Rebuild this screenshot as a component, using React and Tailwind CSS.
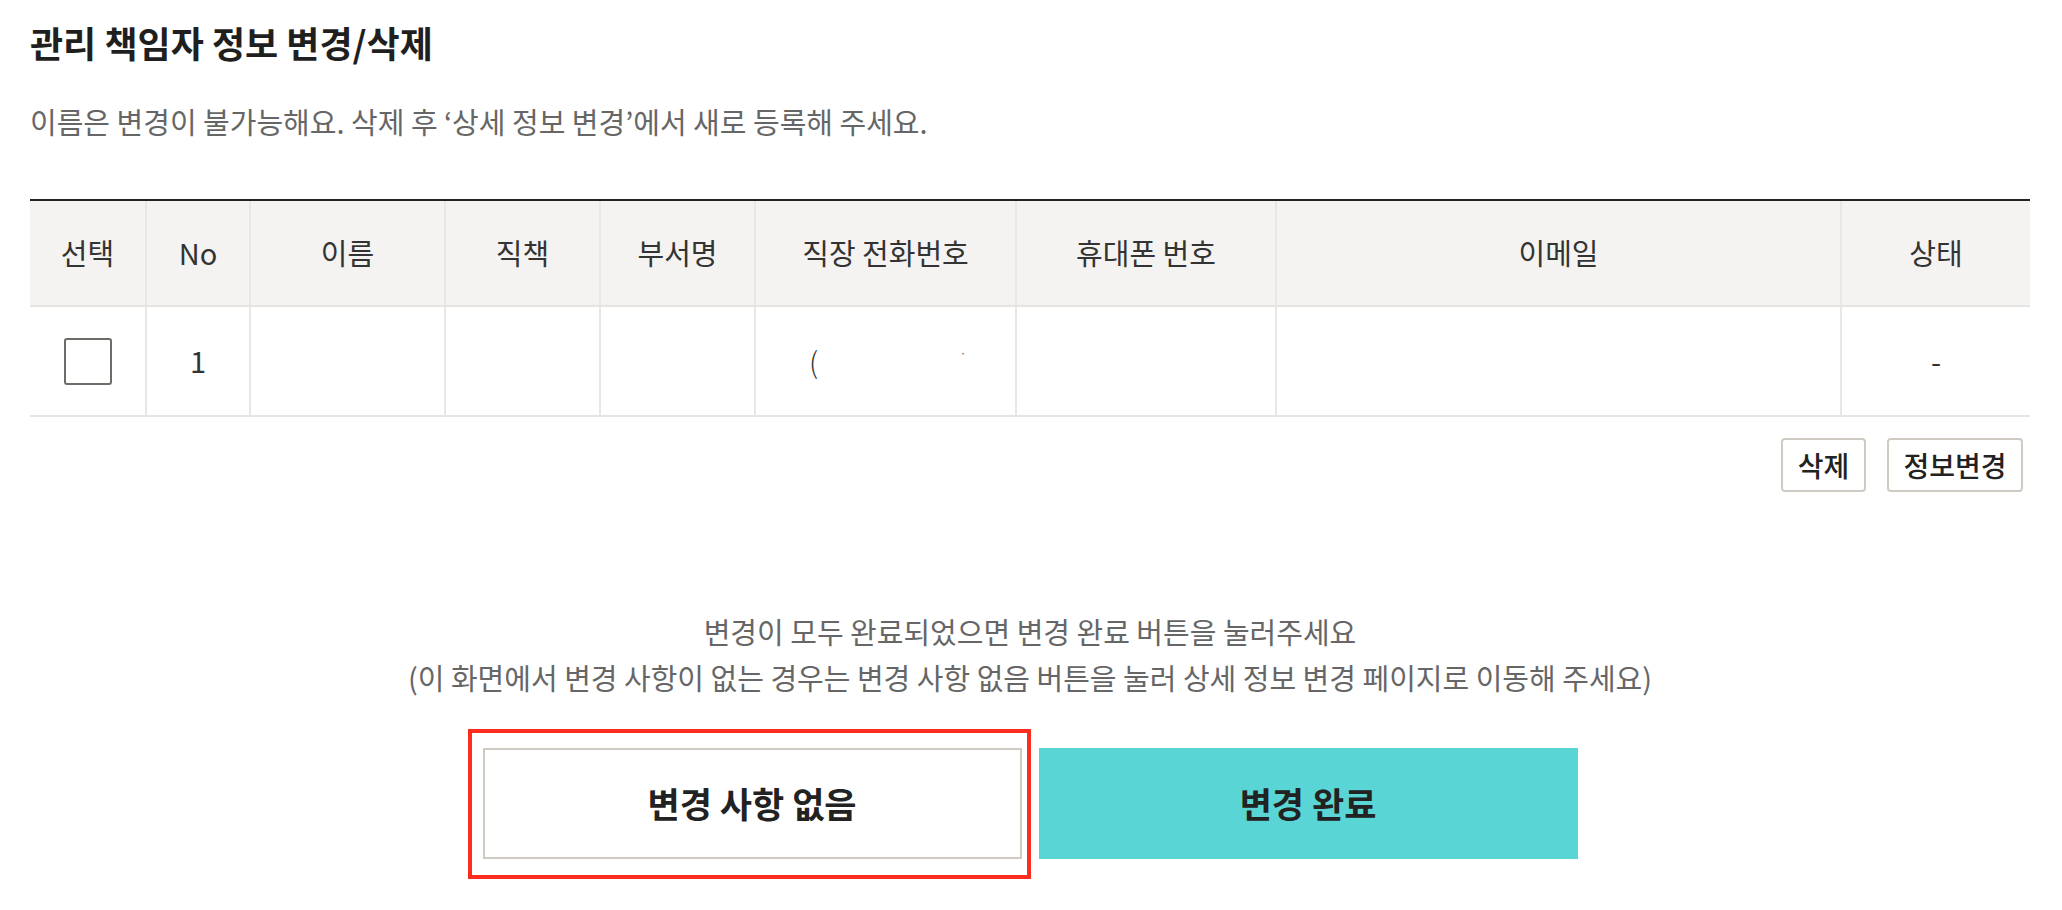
import React from "react";

export default function App() {
  const headers = ["선택", "No", "이름", "직책", "부서명", "직장 전화번호", "휴대폰 번호", "이메일", "상태"];
  return (
    <div className="w-[2062px] min-h-[910px] bg-white pl-[30px] pr-[32px] font-['Noto_Sans_CJK_KR',sans-serif] text-[#222]">
      <h1 className="pt-[21px] text-[36px] leading-[42px] font-bold text-[#1f1f1f]">관리 책임자 정보 변경/삭제</h1>
      <p className="mt-[41px] text-[29px] leading-[34px] text-[#666]">
        이름은 변경이 불가능해요. 삭제 후 ‘상세 정보 변경’에서 새로 등록해 주세요.
      </p>

      <div className="mt-[61px] w-[2000px] border-t-2 border-[#222]">
        <div className="grid grid-cols-[117px_104px_195px_155px_155px_261px_260px_565px_188px] bg-[#f4f3f1] border-b-2 border-[#e6e3e0]">
          {headers.map((h, i) => (
            <div
              key={h}
              className={`h-[104px] flex items-center justify-center text-[29px] text-[#333] ${i < headers.length - 1 ? "border-r-2 border-[#e9e6e3]" : ""}`}
            >
              {h}
            </div>
          ))}
        </div>
        <div className="grid grid-cols-[117px_104px_195px_155px_155px_261px_260px_565px_188px] border-b-2 border-[#e6e3e0]">
          <div className="h-[108px] flex items-center justify-center border-r-2 border-[#e9e6e3]">
            <div className="w-[48px] h-[47px] rounded-[3px] border-2 border-[#6f6b66] bg-white" />
          </div>
          <div className="flex items-center justify-center border-r-2 border-[#e9e6e3] text-[29px] text-[#333]">1</div>
          <div className="border-r-2 border-[#e9e6e3]" />
          <div className="border-r-2 border-[#e9e6e3]" />
          <div className="border-r-2 border-[#e9e6e3]" />
          <div className="flex items-center border-r-2 border-[#e9e6e3] text-[29px] font-light text-[#333] pl-[53px]">
            <span>(</span>
            <span className="ml-[141px] -mt-[16px] text-[14px] text-[#555]">·</span>
          </div>
          <div className="border-r-2 border-[#e9e6e3]" />
          <div className="border-r-2 border-[#e9e6e3]" />
          <div className="flex items-center justify-center text-[29px] text-[#333]">-</div>
        </div>
      </div>

      <div className="mt-[21px] w-[2000px] flex justify-end gap-[21px] pr-[7px]">
        <button className="h-[54px] w-[85px] rounded-[4px] border-2 border-[#d0cbc2] bg-white text-[28px] font-medium text-[#222]">삭제</button>
        <button className="h-[54px] w-[136px] rounded-[4px] border-2 border-[#d0cbc2] bg-white text-[28px] font-medium text-[#222]">정보변경</button>
      </div>

      <div className="mt-[116px] w-[2000px] flex flex-col items-center text-[29px] leading-[46px] text-[#666]">
        <p>변경이 모두 완료되었으면 변경 완료 버튼을 눌러주세요</p>
        <p>(이 화면에서 변경 사항이 없는 경우는 변경 사항 없음 버튼을 눌러 상세 정보 변경 페이지로 이동해 주세요)</p>
      </div>

      <div className="mt-[48px] w-[2000px] flex justify-center gap-[17px]">
        <div className="relative">
          <button className="h-[111px] w-[539px] border-2 border-[#d0cbc2] bg-white text-[35px] font-bold text-[#222]">변경 사항 없음</button>
          <div className="pointer-events-none absolute left-[-15px] right-[-9px] top-[-19px] bottom-[-20px] border-4 border-[#ff2d1f]" />
        </div>
        <button className="h-[111px] w-[539px] bg-[#5ad5d5] text-[35px] font-bold text-[#222]">변경 완료</button>
      </div>
    </div>
  );
}
